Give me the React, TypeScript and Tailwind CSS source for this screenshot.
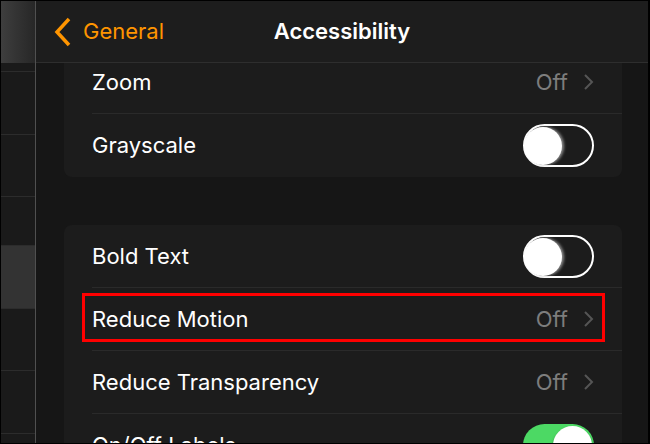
const font = { fontFamily: "Inter, 'Liberation Sans', sans-serif" };

function Chevron() {
  return (
    <svg width="11" height="18" viewBox="0 0 11 18" className="shrink-0">
      <path d="M2 2l7 7-7 7" fill="none" stroke="#555555" strokeWidth="2" />
    </svg>
  );
}

function Toggle({ on }: { on: boolean }) {
  if (on) {
    return (
      <div className="relative h-[43px] w-[71px] rounded-full bg-[#4cd964]">
        <div className="absolute right-[2px] top-[2px] h-[39px] w-[39px] rounded-full bg-white shadow-[0_2px_3px_rgba(0,0,0,0.4)]" />
      </div>
    );
  }
  return (
    <div className="relative h-[43px] w-[71px] rounded-full border-2 border-white bg-[#1c1c1c]">
      <div className="absolute -left-[1px] top-[1px] h-[38px] w-[38px] rounded-full bg-white shadow-[2px_0_3px_rgba(170,170,170,0.8)]" />
    </div>
  );
}

type Row = { label: string; kind: "off" | "toggle" | "on"; last?: boolean; mark?: boolean };

function SettingRow({ label, kind, last, mark }: Row) {
  return (
    <div className="relative flex h-[63px] items-stretch pl-[28px]">
      <div
        className={`flex flex-1 items-center justify-between pr-[28px] ${
          last ? "" : "border-b border-[#2a2a2a]"
        }`}
      >
        <span className="text-[22px] text-white">{label}</span>
        {kind === "off" && (
          <div className="flex items-center gap-[15px]">
            <span className="text-[22px] text-[#7d7d7d]">Off</span>
            <Chevron />
          </div>
        )}
        {kind === "toggle" && <Toggle on={false} />}
        {kind === "on" && <Toggle on />}
      </div>
      {mark && (
        <div className="absolute left-[18px] top-[5px] h-[49px] w-[523px] border-[3px] border-[#ff0000]" />
      )}
    </div>
  );
}

export default function App() {
  const sideRows = [
    { h: "h-[9px]", sel: false },
    { h: "h-[63px]", sel: false },
    { h: "h-[62px]", sel: false },
    { h: "h-[49px]", sel: false },
    { h: "h-[63px]", sel: true },
    { h: "h-[62px]", sel: false },
    { h: "h-[63px]", sel: false },
  ];

  return (
    <div
      className="flex h-[444px] w-[650px] overflow-hidden border-b border-l border-r-2 border-t border-black bg-black"
      style={font}
    >
      {/* sidebar */}
      <div className="flex w-[35px] shrink-0 flex-col border-r border-[#505050] bg-[#1a1a1a]">
        <div className="h-[62px] shrink-0 bg-gradient-to-r from-[#3e3e3e] to-[#272727]" />
        {sideRows.map((r, i) => (
          <div
            key={i}
            className={`${r.h} shrink-0 border-b border-[#2c2c2c] ${r.sel ? "bg-[#333333]" : ""}`}
          />
        ))}
      </div>

      {/* main */}
      <div className="flex min-w-0 flex-1 flex-col bg-[#161616]">
        <div className="grid h-[62px] shrink-0 grid-cols-[1fr_auto_1fr] items-center border-b border-[#2e2e2e] bg-[#1d1d1d]">
          <div className="flex items-center gap-[10px] pl-[17px] text-[#ff9500]">
            <svg width="20" height="30" viewBox="0 0 20 30">
              <path d="M16 2L4 15l12 13" fill="none" stroke="#ff9500" strokeWidth="3.5" />
            </svg>
            <span className="text-[22px]">General</span>
          </div>
          <span className="text-[22px] font-semibold text-white">Accessibility</span>
          <div />
        </div>

        <div className="flex-1 overflow-hidden">
          <div className="-mt-[12px] ml-[28px] mr-[26px] rounded-b-[8px] bg-[#1c1c1c]">
            <SettingRow label="Zoom" kind="off" />
            <SettingRow label="Grayscale" kind="toggle" last />
          </div>
          <div className="ml-[28px] mr-[26px] mt-[48px] rounded-t-[8px] bg-[#1c1c1c]">
            <SettingRow label="Bold Text" kind="toggle" />
            <SettingRow label="Reduce Motion" kind="off" mark />
            <SettingRow label="Reduce Transparency" kind="off" />
            <SettingRow label="On/Off Labels" kind="on" last />
          </div>
        </div>
      </div>
    </div>
  );
}
